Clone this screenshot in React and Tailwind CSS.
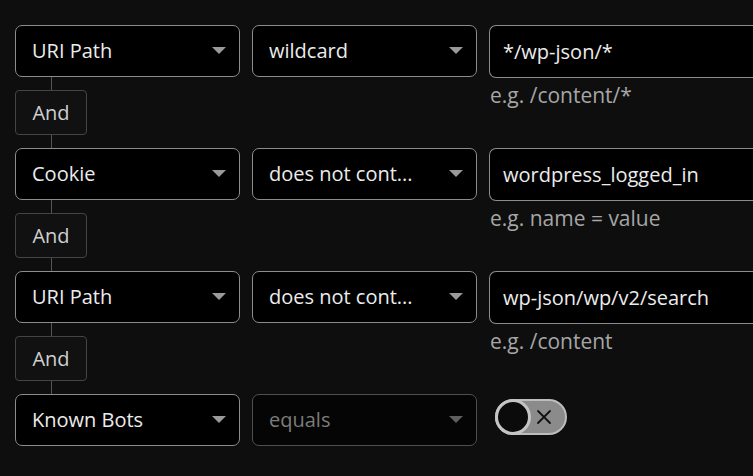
import React from "react";

const font = { fontFamily: '"Open Sans", "Noto Sans", Arial, sans-serif' };

function Caret({ muted }) {
  return (
    <svg width="14" height="8" viewBox="0 0 14 8" className="shrink-0">
      <path d="M0 0 L14 0 L7 7 Z" fill={muted ? "#5f5f5f" : "#9a9a9a"} />
    </svg>
  );
}

function Select({ value, disabled }) {
  return (
    <div
      className={
        "flex h-[52px] w-[225px] shrink-0 items-center justify-between rounded-[7px] border pl-4 pr-[13px] text-[20px] " +
        (disabled
          ? "border-[#4f4f4f] bg-[#050505] text-[#7c7c7c]"
          : "border-[#8c8c8c] bg-black text-[#ececec]")
      }
    >
      <span>{value}</span>
      <Caret muted={disabled} />
    </div>
  );
}

function Connector() {
  return (
    <div className="flex w-[72px] flex-col items-center">
      <div className="h-[13px] w-px bg-[#555]" />
      <div className="flex h-[45px] w-[72px] items-center justify-center rounded-[4px] border border-[#444] bg-[#111] text-[20px] text-[#cfcfcf]">
        And
      </div>
      <div className="h-[13px] w-px bg-[#555]" />
    </div>
  );
}

function Condition({ field, op, value, hint, last }) {
  return (
    <div className="flex items-start">
      <div className="flex flex-col">
        <Select value={field} />
        {!last && <Connector />}
      </div>
      <div className="ml-3">
        <Select value={op} />
      </div>
      <div className="ml-3 flex flex-col">
        <div className="flex h-[53px] w-[320px] items-center rounded-l-[7px] border border-r-0 border-[#8c8c8c] bg-black pl-[13px] text-[20px] text-[#ececec]">
          {value}
        </div>
        <div className="mt-[3px] pl-px text-[21px] leading-[28px] text-[#a6a6a6]">{hint}</div>
      </div>
    </div>
  );
}

export default function App() {
  return (
    <div className="h-[476px] w-[753px] overflow-hidden bg-[#0e0e0e] pl-[15px] pt-[25px]" style={font}>
      <Condition field="URI Path" op="wildcard" value="*/wp-json/*" hint="e.g. /content/*" />
      <Condition field="Cookie" op="does not cont..." value="wordpress_logged_in" hint="e.g. name = value" />
      <Condition field="URI Path" op="does not cont..." value="wp-json/wp/v2/search" hint="e.g. /content" />
      <div className="flex items-start">
        <Select value="Known Bots" />
        <div className="ml-3">
          <Select value="equals" disabled />
        </div>
        <div className="ml-[18px] mt-[5px] flex h-[36px] w-[72px] items-center rounded-full border-2 border-[#bdbdbd] bg-[#8b8b8b]">
          <div className="-ml-[2px] h-[36px] w-[36px] rounded-full border-[3px] border-[#c4c4c4] bg-[#0b0b0b]" />
          <svg width="16" height="16" viewBox="0 0 16 16" className="ml-[5px]">
            <path d="M2 2 L14 14 M14 2 L2 14" stroke="#111" strokeWidth="1.8" strokeLinecap="round" />
          </svg>
        </div>
      </div>
    </div>
  );
}
